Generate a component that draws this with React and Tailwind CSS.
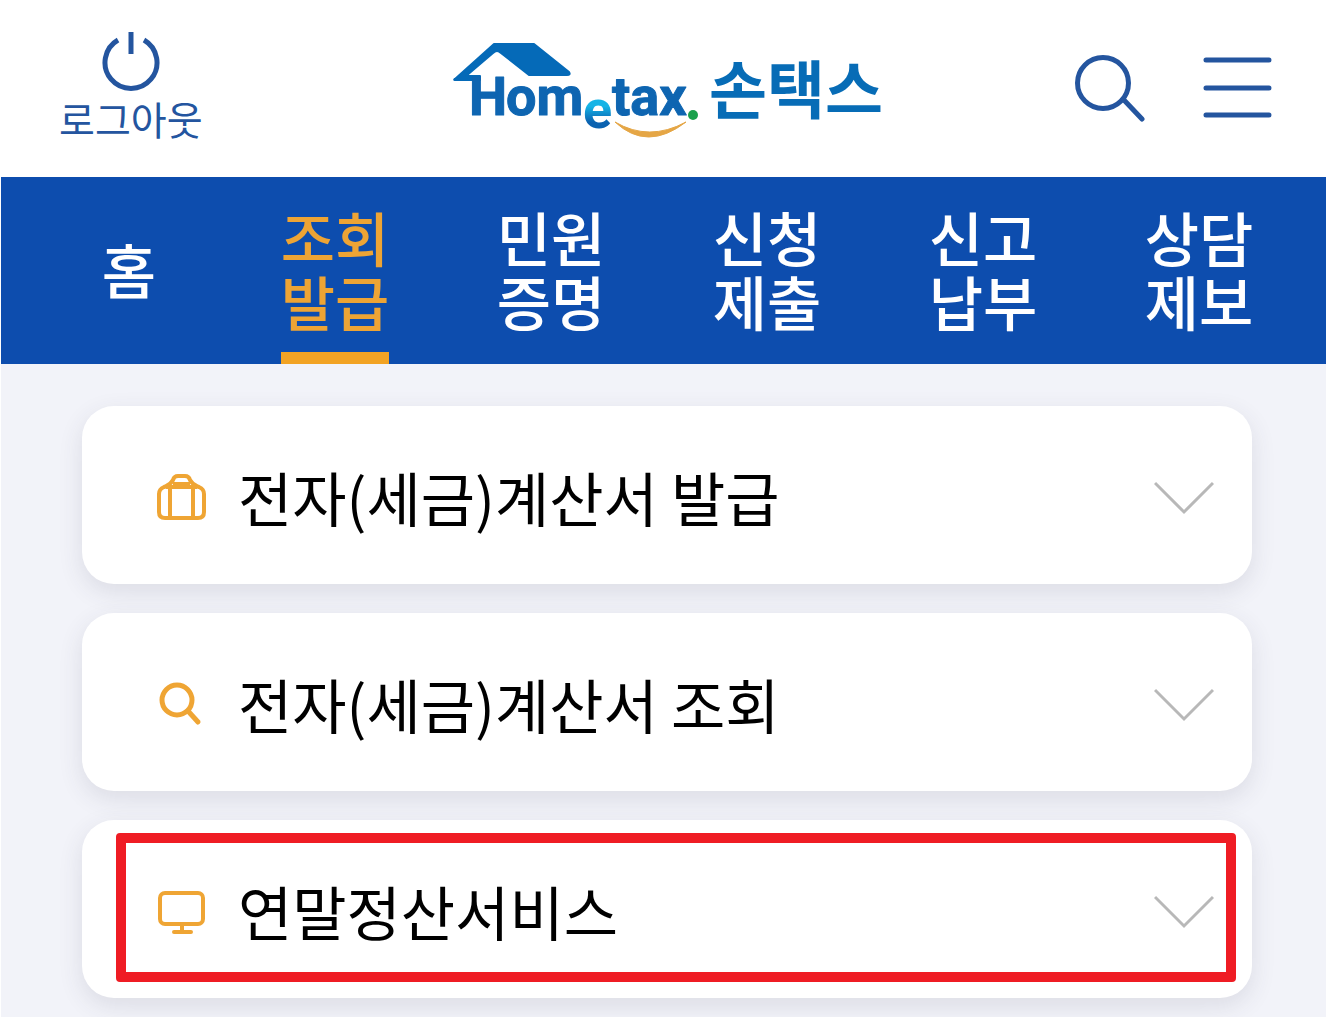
const navItems = [
  { label: "홈" },
  { label: "조회\n발급", active: true },
  { label: "민원\n증명" },
  { label: "신청\n제출" },
  { label: "신고\n납부" },
  { label: "상담\n제보" },
];

const menuItems = [
  { label: "전자(세금)계산서 발급", Icon: BriefcaseIcon },
  { label: "전자(세금)계산서 조회", Icon: LensIcon },
  { label: "연말정산서비스", Icon: MonitorIcon, marked: true },
];

function BriefcaseIcon() {
  return (
    <svg width="52" height="52" viewBox="0 0 52 52" fill="none" stroke="#efa534" strokeWidth="4">
      <path d="M14 13L8 15Q3 17 3 22V40Q3 46 9 46H42Q48 46 48 40V22Q48 17 43 15L37 13" />
      <path d="M14 14V46M37 14V46" />
      <path d="M10 14Q15 12 17 8Q18 4 22 4H29Q33 4 34 8Q36 12 41 14" />
      <path d="M10 15H41M17 12H34" />
    </svg>
  );
}

function LensIcon() {
  return (
    <svg width="52" height="52" viewBox="0 0 52 52" fill="none" stroke="#efa534" strokeWidth="5" strokeLinecap="round">
      <circle cx="21" cy="21" r="15" />
      <path d="M32 32L42 43" />
    </svg>
  );
}

function MonitorIcon() {
  return (
    <svg width="52" height="52" viewBox="0 0 52 52" fill="none" stroke="#efa534" strokeWidth="4" strokeLinecap="round">
      <rect x="4" y="7" width="43" height="31" rx="5" />
      <path d="M26 38V45M18 46H35" />
    </svg>
  );
}

function Chevron() {
  return (
    <svg width="60" height="34" viewBox="0 0 60 34" fill="none" stroke="#b8b8b8" strokeWidth="3">
      <path d="M1 2L30 31L59 2" />
    </svg>
  );
}

function Logo() {
  return (
    <svg width="432" height="112" viewBox="0 0 432 112" role="img" aria-label="Hometax 손택스">
      <defs>
        <linearGradient id="logo-e" x1="0" y1="0" x2="0" y2="1">
          <stop offset="0.45" stopColor="#16b4e6" />
          <stop offset="0.7" stopColor="#0b62b0" />
        </linearGradient>
      </defs>
      <path
        d="M3 40L42 5H82L117 33Q119 36 115 36H77L49 14Q45 10 41 14L14 37H28V41H4Q1 41 3 40Z"
        fill="#056ab8"
        stroke="#056ab8"
        strokeWidth="2"
        strokeLinejoin="round"
      />
      <g
        fill="#0e65b1"
        stroke="#0e65b1"
        strokeWidth="1"
        strokeLinejoin="round"
        className="text-[54px] font-bold [font-family:Roboto,sans-serif]"
      >
        <text x="17" y="76">H</text>
        <text x="54" y="76">om</text>
        <text x="160" y="76">tax</text>
        <text x="131" y="89" fill="url(#logo-e)" stroke="none">e</text>
      </g>
      <path d="M163 83Q195 113 234 83Q197 103 163 83Z" fill="#e5a645" stroke="#e5a645" strokeWidth="1" />
      <circle cx="241" cy="76" r="5" fill="#1ba14c" />
      <text
        x="257"
        y="74"
        fill="#076cb6"
        className="text-[63px] font-bold [font-family:'Noto_Sans_CJK_KR',sans-serif]"
      >
        손택스
      </text>
    </svg>
  );
}

function Header() {
  return (
    <header className="flex items-start justify-between h-[177px] pl-[58px] pr-[54px]">
      <button className="flex flex-col items-center pt-[30px] text-[#24559f]">
        <svg width="60" height="62" viewBox="0 0 60 62" fill="none" stroke="currentColor" strokeWidth="5">
          <path d="M17 10A26 26 0 1 0 43 10" />
          <path d="M30 2V24" />
        </svg>
        <span className="text-[39px] leading-[52px]">로그아웃</span>
      </button>
      <a href="#home" className="pt-[39px] pl-[59px]">
        <Logo />
      </a>
      <div className="flex gap-[56px] pt-[54px] text-[#24559f]">
        <button aria-label="검색">
          <svg width="72" height="68" viewBox="0 0 72 68" fill="none" stroke="currentColor" strokeWidth="5" strokeLinecap="round">
            <circle cx="29" cy="29" r="25.5" />
            <path d="M49 45L68 65" />
          </svg>
        </button>
        <button aria-label="전체메뉴">
          <svg width="70" height="68" viewBox="0 0 70 68" stroke="currentColor" strokeWidth="5" strokeLinecap="round">
            <path d="M4 6H67M4 34H67M4 61H67" />
          </svg>
        </button>
      </div>
    </header>
  );
}

function NavBar() {
  return (
    <nav className="grid grid-cols-[196fr_216fr_216fr_216fr_216fr_216fr] h-[187px] pl-[30px] pr-[19px] bg-[#0d4dae]">
      {navItems.map(({ label, active }) => (
        <a
          key={label}
          href={`#${label.replace("\n", "")}`}
          aria-current={active ? "page" : undefined}
          className={`relative flex flex-col items-center justify-center pb-1 text-[59px] leading-[64px] font-medium ${
            active ? "text-[#eda435]" : "text-white"
          }`}
        >
          <span className="whitespace-pre-line">{label}</span>
          {active && <span className="absolute bottom-0 w-[108px] h-3 bg-[#f2a324]" />}
        </a>
      ))}
    </nav>
  );
}

function MenuCard({ label, Icon, marked }) {
  return (
    <li className="relative">
      <button
        aria-expanded="false"
        className="flex items-center w-full h-[178px] pt-1.5 pl-[74px] pr-[38px] rounded-[32px] bg-white text-black text-left shadow-[0_8px_24px_rgba(60,60,80,0.12)]"
      >
        <Icon />
        <span className="flex-1 pl-[30px] pb-0.5 text-[59px] leading-[80px]">{label}</span>
        <Chevron />
      </button>
      {marked && (
        <div className="absolute top-[13px] bottom-4 left-[34px] right-4 border-10 border-[#ef1c24] rounded pointer-events-none" />
      )}
    </li>
  );
}

export default function App() {
  return (
    <div className="flex flex-col min-h-screen pl-px bg-white [font-family:'Noto_Sans_CJK_KR',sans-serif]">
      <Header />
      <NavBar />
      <main className="flex-1 bg-[#f2f3f9] pt-[42px] pb-[19px] pl-[81px] pr-[74px]">
        <ul className="flex flex-col gap-[29px]">
          {menuItems.map((item) => (
            <MenuCard key={item.label} {...item} />
          ))}
        </ul>
      </main>
    </div>
  );
}
